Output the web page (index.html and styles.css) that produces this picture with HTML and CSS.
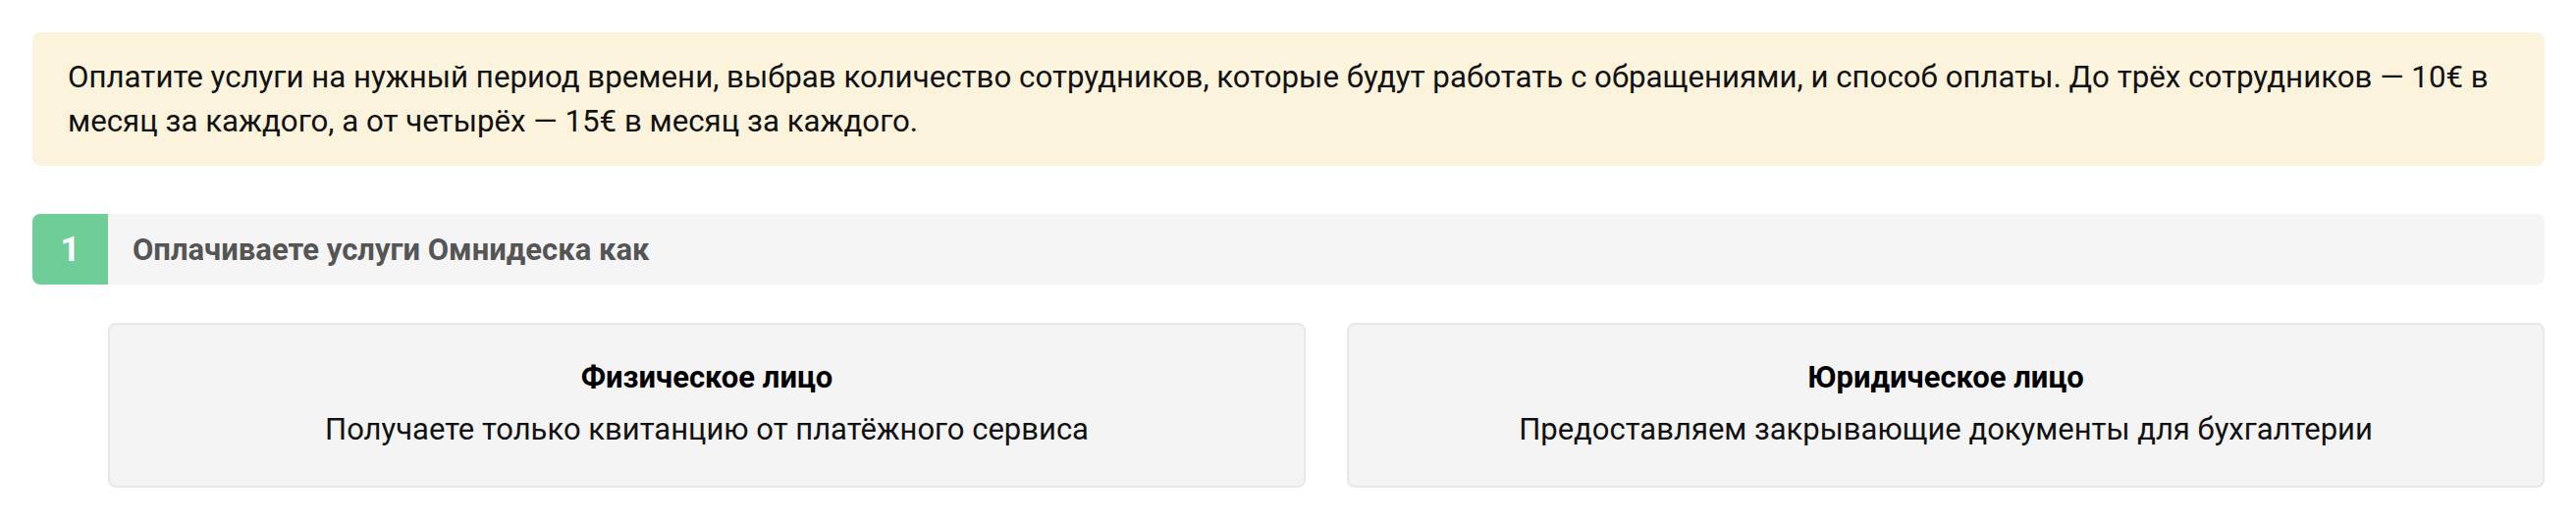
FILE: index.html
```html
<!DOCTYPE html>
<html lang="ru">
<head>
  <meta charset="UTF-8" />
  <meta name="viewport" content="width=device-width, initial-scale=1.0"/>
  <title>Оплата услуг</title>
  <link rel="stylesheet" href="styles.css">
</head>
<body>
  <div class="page">
    <div class="notice">
      Оплатите услуги на нужный период времени, выбрав количество сотрудников, которые будут работать с обращениями, и способ оплаты. До трёх сотрудников — 10€ в месяц за каждого, а от четырёх — 15€ в месяц за каждого.
    </div>

    <section class="step">
      <div class="step-head">
        <div class="step-num">1</div>
        <div class="step-title">Оплачиваете услуги Омнидеска как</div>
      </div>

      <div class="options">
        <div class="option">
          <div class="option-title">Физическое лицо</div>
          <div class="option-text">Получаете только квитанцию от платёжного сервиса</div>
        </div>
        <div class="option">
          <div class="option-title">Юридическое лицо</div>
          <div class="option-text">Предоставляем закрывающие документы для бухгалтерии</div>
        </div>
      </div>
    </section>
  </div>
</body>
</html>
```

FILE: styles.css
```css
body {
  font-family: Roboto, 'Liberation Sans', sans-serif;
  background: #fff;
  color: #111;
  margin: 0;
}

.page {
  padding: 33px 32px 0 33px;
}

.notice {
  background: #fcf3dc;
  border-radius: 8px;
  padding: 23px 36px 23px 36px;
  font-size: 31.25px;
  line-height: 45px;
}

.step {
  margin-top: 49px;
}

.step-head {
  display: flex;
  height: 72px;
  background: #f5f5f5;
  border-radius: 8px;
  overflow: hidden;
}

.step-num {
  width: 77px;
  background: #6fce97;
  color: #fff;
  font-size: 35px;
  font-weight: 700;
  display: flex;
  align-items: center;
  justify-content: center;
}

.step-title {
  display: flex;
  align-items: center;
  padding-left: 25px;
  font-size: 31px;
  font-weight: 700;
  color: #555;
}

.options {
  display: flex;
  gap: 42px;
  margin: 39px 0 0 77px;
}

.option {
  flex: 1;
  background: #f4f4f4;
  border: 2px solid #e8e8e8;
  border-radius: 8px;
  padding: 31px 20px 35px;
  text-align: center;
  font-size: 31px;
  line-height: 45px;
}

.option-title {
  font-weight: 700;
  color: #000;
  margin-bottom: 8px;
}
```
